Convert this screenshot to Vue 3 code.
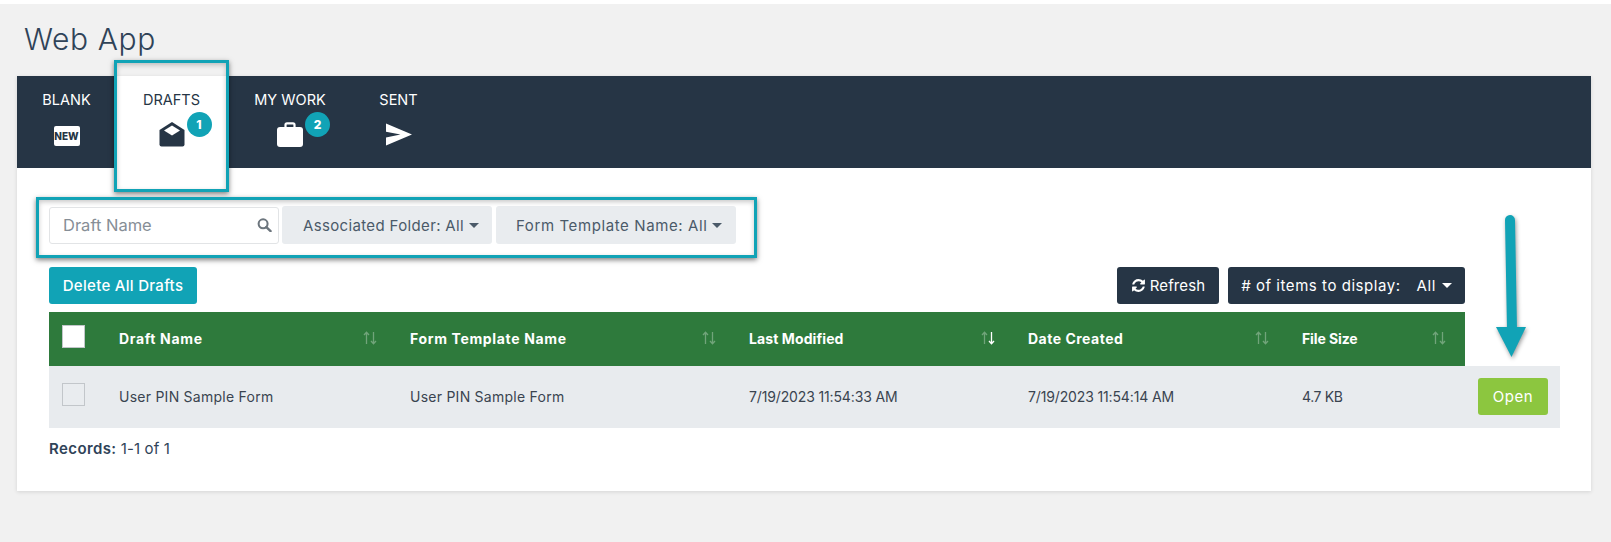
<script setup>
const tabs = [
  { label: 'BLANK', icon: 'new' },
  { label: 'DRAFTS', icon: 'open', badge: 1, active: true },
  { label: 'MY WORK', icon: 'case', badge: 2 },
  { label: 'SENT', icon: 'send' }
]
const cols = [
  { label: 'Draft Name', value: 'User PIN Sample Form' },
  { label: 'Form Template Name', value: 'User PIN Sample Form' },
  { label: 'Last Modified', value: '7/19/2023 11:54:33 AM', sorted: true },
  { label: 'Date Created', value: '7/19/2023 11:54:14 AM' },
  { label: 'File Size', value: '4.7 KB' }
]
</script>

<template>
  <div class="page">
    <h1 class="title">Web App</h1>
    <main class="card">
      <nav class="nav">
        <a v-for="t in tabs" :key="t.label" class="tab" :class="{ active: t.active }">
          <span class="tab-label">{{ t.label }}</span>
          <span class="tab-icon">
            <span v-if="t.icon === 'new'" class="new-icon">NEW</span>
            <svg v-else-if="t.icon === 'open'" width="26" height="25" viewBox="0 0 26 25">
              <path fill="#263545" d="M13 0 25.500 8V22.500a2 2 0 0 1-2 2H2.500a2 2 0 0 1-2-2V8Z" />
              <path fill="#fff" d="M13 3.500 21 8.500 13 13.500 5 8.500Z" />
            </svg>
            <svg v-else-if="t.icon === 'case'" width="26" height="25" viewBox="0 0 26 25">
              <path fill="none" stroke="#fff" stroke-width="2.200" d="M8.500 6V2.800a1.500 1.500 0 0 1 1.500-1.500h6a1.500 1.500 0 0 1 1.500 1.500V6" />
              <rect x="0" y="5" width="26" height="20" rx="3" fill="#fff" />
            </svg>
            <svg v-else width="27" height="24" viewBox="0 0 27 24">
              <path fill="#fff" d="M0 0 27 11.500 0 23V14.500L15 11.500 0 8.500Z" />
            </svg>
            <span v-if="t.badge" class="badge">{{ t.badge }}</span>
          </span>
        </a>
      </nav>

      <section class="content">
        <div class="filters">
          <div class="search">
            <span class="placeholder">Draft Name</span>
            <svg width="15" height="14" viewBox="0 0 16 15" class="search-icon">
              <circle cx="6.500" cy="6.200" r="4.800" fill="none" stroke="#6c757d" stroke-width="2.200" />
              <path d="M10 9.800 14.500 14" stroke="#6c757d" stroke-width="2.600" stroke-linecap="round" />
            </svg>
          </div>
          <button class="dd dd-a">Associated Folder: All<i class="caret"></i></button>
          <button class="dd dd-b">Form Template Name: All<i class="caret"></i></button>
        </div>

        <div class="toolbar">
          <button class="btn teal">Delete All Drafts</button>
          <div class="toolbar-right">
            <button class="btn dark refresh">
              <svg width="15" height="15" viewBox="0 0 1792 1792"><path fill="#fff" d="M1639 1056q0 5-1 7-64 268-268 434.500t-478 166.500q-146 0-282.500-55t-243.500-157l-129 129q-19 19-45 19t-45-19-19-45v-448q0-26 19-45t45-19h448q26 0 45 19t19 45-19 45l-137 137q71 66 161 102t187 36q134 0 250-65t186-179q11-17 53-117 8-23 30-23h192q13 0 22.500 9.500t9.500 22.500zm25-800v448q0 26-19 45t-45 19h-448q-26 0-45-19t-19-45 19-45l138-138q-148-137-349-137-134 0-250 65t-186 179q-11 17-53 117-8 23-30 23h-199q-13 0-22.500-9.500t-9.500-22.500v-7q65-268 270-434.500t480-166.500q146 0 284 55.500t245 156.500l130-129q19-19 45-19t45 19 19 45z" /></svg>
              Refresh
            </button>
            <button class="btn dark items"><span>#&nbsp;of items to display:</span><span class="all">All</span><i class="caret white"></i></button>
          </div>
        </div>

        <div class="thead grid">
          <div class="cell-check"><span class="check head"></span></div>
          <div v-for="c in cols" :key="c.label" class="th">
            <span>{{ c.label }}</span>
            <svg class="sort" width="14" height="14" viewBox="0 0 14 14">
              <path class="sort-up" d="M3.500 13V1.500M1 4 3.500 1.200 6 4" fill="none" stroke-width="1.300" />
              <path :class="c.sorted ? 'sort-on' : 'sort-up'" d="M10.500 1V12.500M8 10 10.500 12.800 13 10" fill="none" stroke-width="1.300" />
            </svg>
          </div>
        </div>
        <div class="tbody">
          <div class="grid row-grid">
            <div class="cell-check"><span class="check"></span></div>
            <div v-for="c in cols" :key="c.label" class="td">{{ c.value }}</div>
          </div>
          <button class="open">Open</button>
        </div>

        <p class="records"><b>Records:</b> 1-1 of 1</p>
      </section>
    </main>

    <div class="callout callout-tab"></div>
    <div class="callout callout-filter"></div>
    <svg class="arrow" width="60" height="160" viewBox="0 0 60 160">
      <path d="M20 10 22 120" stroke="#11a3b6" stroke-width="10" stroke-linecap="round" fill="none" />
      <path d="M6 117H36L21.500 147Z" fill="#11a3b6" />
    </svg>
  </div>
</template>

<style>
html, body { margin: 0; padding: 0; background: #fff; }
</style>

<style scoped>
* { box-sizing: border-box; }
.page {
  position: relative;
  height: 542px;
  width: 1611px;
  overflow: hidden;
  margin-top: 0;
  border-top: 4px solid #fff;
  background: #f1f1f1;
  padding: 0 20px 0 17px;
  font-family: Inter, "Noto Sans", sans-serif;
  color: #2f3d4c;
}
.title {
  margin: 0;
  height: 72px;
  padding: 16px 0 0 7px;
  font-size: 30px;
  line-height: 38px;
  font-weight: 300;
  letter-spacing: 0.6px;
  color: #2f4358;
}
.card {
  height: 415px;
  background: #fff;
  box-shadow: 0 1px 4px rgba(0, 0, 0, 0.12);
}
.nav {
  display: grid;
  grid-template-columns: 99px 111px 126px 91px 1fr;
  height: 92px;
  background: #263545;
}
.tab {
  display: flex;
  flex-direction: column;
  align-items: center;
  padding-top: 14px;
  color: #fff;
}
.tab.active { background: #fff; color: #263545; }
.tab-label { font-size: 14.500px; line-height: 20px; }
.tab-icon { position: relative; display: flex; align-items: flex-end; justify-content: center; width: 26px; height: 26px; margin-top: 11px; }
.new-icon {
  display: block;
  width: 26px;
  height: 20px;
  margin-bottom: 1px;
  border-radius: 2px;
  background: #fff;
  color: #263545;
  font-size: 10px;
  line-height: 20px;
  font-weight: 800;
  text-align: center;
}
.badge {
  position: absolute;
  left: 28px;
  top: -9px;
  width: 25px;
  height: 25px;
  border-radius: 50%;
  background: #11a3b6;
  color: #fff;
  font-size: 12px;
  font-weight: 800;
  line-height: 25px;
  text-align: center;
}
.content { padding: 38px 31px 0 32px; }
.filters { display: flex; gap: 3px; height: 38px; }
.search {
  position: relative;
  display: flex;
  align-items: center;
  width: 230px;
  height: 37px;
  margin-top: 1px;
  padding: 0 0 2px 13px;
  background: #fff;
  border: 1px solid #e2e4e6;
  border-radius: 3px;
}
.placeholder { font-size: 16.500px; color: #868e96; }
.search-icon { position: absolute; right: 6px; top: 10px; }
button { font-family: inherit; border: 0; cursor: pointer; }
.dd {
  display: flex;
  align-items: center;
  background: #e9ecef;
  border-radius: 3px;
  font-size: 15px;
  color: #4b5a69;
  padding: 0 0 0 21px;
}
.dd-a { width: 210px; letter-spacing: 0.35px; }
.dd-b { width: 240px; margin-left: 1px; padding-left: 20px; letter-spacing: 0.6px; }
.caret {
  display: inline-block;
  width: 0;
  height: 0;
  margin-left: 5px;
  border-left: 5px solid transparent;
  border-right: 5px solid transparent;
  border-top: 5px solid #4b5a69;
}
.caret.white { border-top-color: #fff; margin-left: 6px; }
.toolbar {
  display: flex;
  justify-content: space-between;
  width: 1416px;
  height: 37px;
  margin-top: 23px;
}
.toolbar-right { display: flex; gap: 9px; }
.btn {
  display: flex;
  align-items: center;
  justify-content: center;
  height: 37px;
  border-radius: 3px;
  color: #fff;
  font-size: 15px;
  padding: 0;
}
.teal { width: 148px; background: #11a3b6; font-weight: 500; letter-spacing: 0.3px; }
.dark { background: #263545; }
.refresh { width: 102px; gap: 4px; letter-spacing: 0.1px; }
.items { width: 237px; letter-spacing: 0.55px; }
.all { margin-left: 16px; }
.grid {
  display: grid;
  grid-template-columns: 56px 291px 339px 279px 274px 177px;
  align-items: center;
}
.thead {
  width: 1416px;
  height: 54px;
  margin-top: 8px;
  background: #2e7a3c;
  color: #fff;
}
.th {
  display: flex;
  align-items: center;
  justify-content: space-between;
  padding: 0 19px 2px 14px;
  font-size: 14px;
  font-weight: 700;
  letter-spacing: 0.1px;
}
.th:nth-child(2), .th:nth-child(3) { letter-spacing: 0.65px; }
.th:nth-child(5) { letter-spacing: 0.5px; }
.th:nth-child(6) { letter-spacing: -0.1px; }
.sort-up { stroke: rgba(255, 255, 255, 0.32); }
.sort-on { stroke: #fff; }
.cell-check { padding: 0 0 6px 13px; display: flex; align-items: center; }
.thead .cell-check { padding-bottom: 0; }
.check {
  display: block;
  width: 23px;
  height: 23px;
  border: 1px solid #c2c6ca;
  background: #e9ecef;
}
.check.head { background: #fff; margin-bottom: 5px; }
.tbody {
  display: flex;
  align-items: center;
  height: 62px;
  background: #e8ebee;
}
.row-grid { width: 1416px; color: #3a4450; }
.td { padding: 0 0 2px 14px; font-size: 14px; letter-spacing: 0.25px; }
.td:nth-child(4), .td:nth-child(5) { letter-spacing: -0.14px; }
.td:nth-child(6) { letter-spacing: -0.4px; }
.open {
  width: 70px;
  height: 37px;
  margin: 0 0 2px 13px;
  border-radius: 3px;
  background: #8cc63f;
  color: #fff;
  font-size: 15px;
  letter-spacing: 0.5px;
}
.records {
  margin: 11px 0 0;
  font-size: 15px;
  line-height: 20px;
  color: #2f4358;
  letter-spacing: 0.1px;
}
.records b { font-weight: 600; letter-spacing: 0.4px; }
.callout {
  position: absolute;
  border: 3px solid #11a3b6;
  box-shadow: 0 2px 5px rgba(0, 0, 0, 0.5), inset 0 2px 5px rgba(0, 0, 0, 0.22);
}
.callout-tab { left: 114px; top: 56px; width: 115px; height: 132px; }
.callout-filter { left: 36px; top: 193px; width: 721px; height: 61px; }
.arrow {
  position: absolute;
  left: 1490px;
  top: 206px;
  filter: drop-shadow(1px 2px 2px rgba(0, 0, 0, 0.4));
}
</style>
